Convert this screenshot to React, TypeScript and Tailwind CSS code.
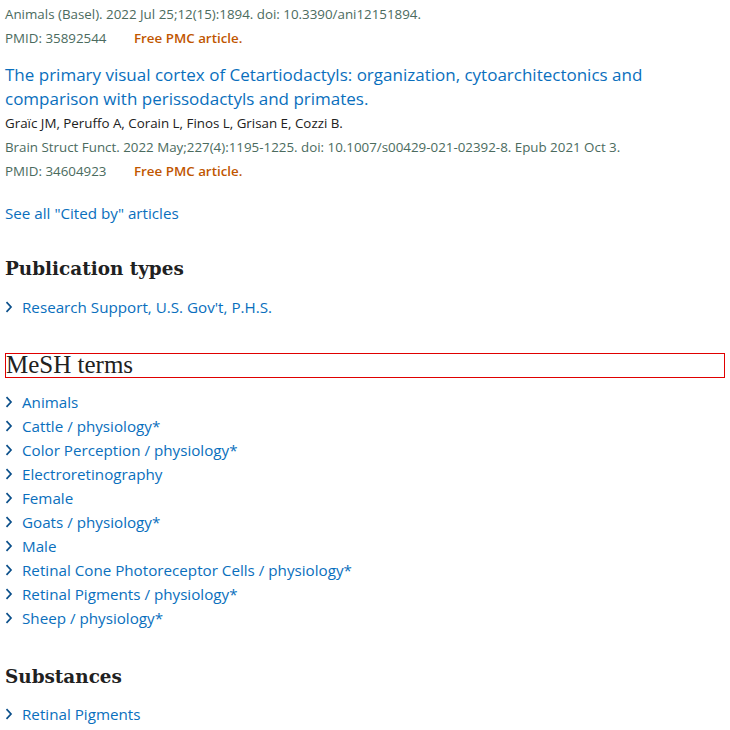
import React from "react";

const Chevron = () => (
  <svg width="8" height="12" viewBox="0 0 8 12" className="shrink-0 mr-[9px]">
    <path d="M1.5 1.2 L6 6 L1.5 10.8" fill="none" stroke="#0b4f8a" strokeWidth="1.7" />
  </svg>
);

const Item = ({ text }: { text: string }) => (
  <div className="flex items-center h-6">
    <Chevron />
    <span className="text-[#0a6fbd] text-[15.2px]">{text}</span>
  </div>
);

const sans = { fontFamily: "'Open Sans', 'Noto Sans', sans-serif" };
const serifHead = { fontFamily: "'DejaVu Serif', serif" };

export default function App() {
  const mesh = [
    "Animals",
    "Cattle / physiology*",
    "Color Perception / physiology*",
    "Electroretinography",
    "Female",
    "Goats / physiology*",
    "Male",
    "Retinal Cone Photoreceptor Cells / physiology*",
    "Retinal Pigments / physiology*",
    "Sheep / physiology*",
  ];
  return (
    <div className="w-[730px] h-[730px] bg-white overflow-hidden pl-[5px] pr-[5px]" style={sans}>
      <div className="text-[13.35px] text-[#4b6b5e] h-6 leading-6 mt-[2px]">Animals (Basel). 2022 Jul 25;12(15):1894. doi: 10.3390/ani12151894.</div>
      <div className="text-[13.35px] h-6 leading-6 flex">
        <span className="text-[#4b6b5e] w-[129px]">PMID: 35892544</span>
        <span className="text-[#c05600] font-semibold">Free PMC article.</span>
      </div>
      <div className="text-[17px] leading-6 text-[#0a6fbd] mt-[13px]">
        The primary visual cortex of Cetartiodactyls: organization, cytoarchitectonics and comparison with perissodactyls and primates.
      </div>
      <div className="text-[13.35px] h-6 leading-6 text-[#212121]">Graïc JM, Peruffo A, Corain L, Finos L, Grisan E, Cozzi B.</div>
      <div className="text-[13.35px] h-6 leading-6 text-[#4b6b5e]">Brain Struct Funct. 2022 May;227(4):1195-1225. doi: 10.1007/s00429-021-02392-8. Epub 2021 Oct 3.</div>
      <div className="text-[13.35px] h-6 leading-6 flex">
        <span className="text-[#4b6b5e] w-[129px]">PMID: 34604923</span>
        <span className="text-[#c05600] font-semibold">Free PMC article.</span>
      </div>
      <div className="text-[15.2px] leading-6 text-[#0a6fbd] mt-[18px]">See all "Cited by" articles</div>

      <h2 className="text-[18.4px] font-bold text-[#212121] mt-[30px] leading-7" style={serifHead}>Publication types</h2>
      <div className="mt-[12px]">
        <Item text="Research Support, U.S. Gov't, P.H.S." />
      </div>

      <h2 className="mt-[34px] border border-[#e00000] text-[25px] leading-[22px] h-[25px] text-[#212121]" style={{ fontFamily: "'Liberation Serif', serif" }}>MeSH terms</h2>
      <div className="mt-[12px]">
        {mesh.map((m) => (
          <Item key={m} text={m} />
        ))}
      </div>

      <h2 className="text-[18.4px] font-bold text-[#212121] mt-[33px] leading-7" style={serifHead}>Substances</h2>
      <div className="mt-[11px]">
        <Item text="Retinal Pigments" />
      </div>
    </div>
  );
}
